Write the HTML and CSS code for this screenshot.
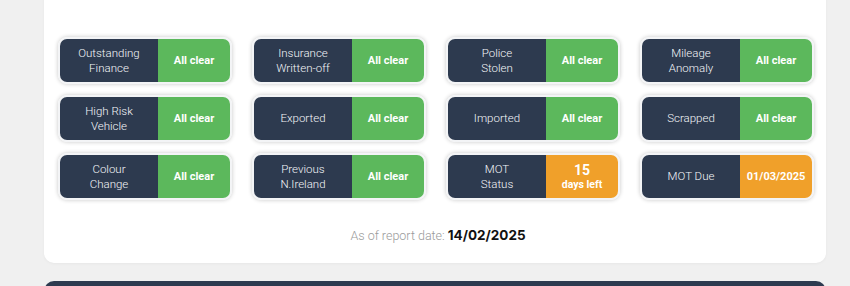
FILE: index.html
```html
<!DOCTYPE html>
<html>
<head>
<meta charset="utf-8">
<link rel="stylesheet" href="styles.css">
</head>
<body>
<div class="page">
  <div class="card">
    <div class="grid">
      <div class="tile"><div class="label">Outstanding<br>Finance</div><div class="value ok">All clear</div></div>
      <div class="tile"><div class="label">Insurance<br>Written-off</div><div class="value ok">All clear</div></div>
      <div class="tile"><div class="label">Police<br>Stolen</div><div class="value ok">All clear</div></div>
      <div class="tile"><div class="label">Mileage<br>Anomaly</div><div class="value ok">All clear</div></div>
      <div class="tile"><div class="label">High Risk<br>Vehicle</div><div class="value ok">All clear</div></div>
      <div class="tile"><div class="label">Exported</div><div class="value ok">All clear</div></div>
      <div class="tile"><div class="label">Imported</div><div class="value ok">All clear</div></div>
      <div class="tile"><div class="label">Scrapped</div><div class="value ok">All clear</div></div>
      <div class="tile"><div class="label">Colour<br>Change</div><div class="value ok">All clear</div></div>
      <div class="tile"><div class="label">Previous<br>N.Ireland</div><div class="value ok">All clear</div></div>
      <div class="tile"><div class="label">MOT<br>Status</div><div class="value warn"><span class="big">15</span><span class="small">days left</span></div></div>
      <div class="tile"><div class="label">MOT Due</div><div class="value warn">01/03/2025</div></div>
    </div>
    <div class="date">As of report date: <strong>14/02/2025</strong></div>
  </div>
  <div class="dark-card"></div>
</div>
</body>
</html>
```
FILE: styles.css
```css
html, body {
  margin: 0;
  padding: 0;
  background: #f0f0f0;
  font-family: Roboto, "Liberation Sans", sans-serif;
  overflow: hidden;
}
.page {
  padding-left: 44px;
  width: 782px;
}
.card {
  background: #fff;
  border-radius: 10px;
  margin-top: -12px;
  padding: 49px 13px 0;
  height: 226px;
  box-shadow: 0 1px 3px rgba(0,0,0,0.04);
}
.grid {
  display: grid;
  grid-template-columns: repeat(4, 174px);
  column-gap: 20px;
  row-gap: 11px;
  padding-left: 1px;
}
.tile {
  display: flex;
  height: 43px;
  border: 2px solid #f3f4f6;
  border-radius: 9px;
  overflow: hidden;
  box-shadow: 0 0 4px rgba(0,0,0,0.22);
}
.label {
  width: 98px;
  background: #2d3a4f;
  color: #f4f6f9;
  font-weight: 300;
  font-size: 11.5px;
  line-height: 15px;
  display: flex;
  align-items: center;
  justify-content: center;
  text-align: center;
}
.value {
  flex: 1;
  display: flex;
  flex-direction: column;
  align-items: center;
  justify-content: center;
  color: #fff;
  font-weight: 700;
  font-size: 11px;
}
.ok { background: #5cb85c; }
.warn { background: #f0a02a; }
.big { font-size: 14px; line-height: 16px; }
.small { font-size: 10.5px; line-height: 14px; }
.date {
  text-align: center;
  margin-top: 27px;
  color: #9a9a9a;
  font-weight: 300;
  font-size: 12.5px;
  padding-left: 6px;
}
.date strong {
  color: #111;
  font-family: Inter, sans-serif;
  font-weight: 700;
  font-size: 13.5px;
}
.dark-card {
  margin-top: 18px;
  height: 40px;
  background: #2d3a4f;
  border-radius: 10px;
}
```
